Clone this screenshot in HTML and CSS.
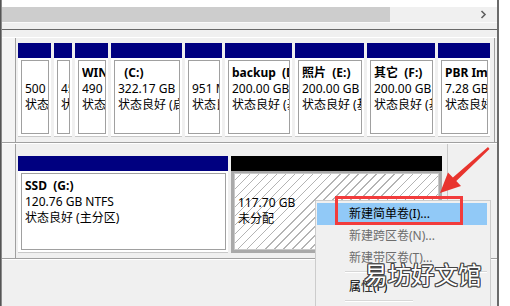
FILE: index.html
```html
<!DOCTYPE html>
<html>
    <head>
        <title>磁盘管理</title>
        <link rel="stylesheet" href="styles.css">
    </head>
    <body>
        <div class="screen">
            <div class="edge_left"></div>
            <div class="main">
                <div class="top_white"></div>
                <div class="hscroll">
                    <div class="thumb"></div>
                    <div class="arrow">
                        <svg width="7" height="9" viewBox="0 0 7 9"><path d="M1.5 1 L5 4.5 L1.5 8" fill="none" stroke="#606060" stroke-width="1.6"/></svg>
                    </div>
                </div>
                <div class="band"></div>
                <div class="lower">
                    <!-- disk 0 -->
                    <div class="disk disk_one">
                        <div class="label"></div>
                        <div class="parts">
                            <div class="part" style="width:33px">
                                <div class="bar"></div>
                                <div class="body"><div class="inner"><b class="name">&nbsp;</b><span>500 MB NTFS</span><span>状态良好 (恢复分区)</span></div></div>
                            </div>
                            <div class="part" style="width:18px">
                                <div class="bar"></div>
                                <div class="body"><div class="inner"><b class="name">&nbsp;</b><span>450 MB</span><span>状态良好 (EFI 系统分区)</span></div></div>
                            </div>
                            <div class="part" style="width:33px">
                                <div class="bar"></div>
                                <div class="body"><div class="inner"><b class="name">WINRE</b><span>490 MB NTFS</span><span>状态良好 (恢复分区)</span></div></div>
                            </div>
                            <div class="part" style="width:71px">
                                <div class="bar"></div>
                                <div class="body"><div class="inner"><b class="name">&nbsp;&nbsp;(C:)</b><span>322.17 GB NTFS</span><span>状态良好 (启动, 页面文件)</span></div></div>
                            </div>
                            <div class="part" style="width:37px">
                                <div class="bar"></div>
                                <div class="body"><div class="inner"><b class="name">&nbsp;</b><span>951 MB</span><span>状态良好 (恢复分区)</span></div></div>
                            </div>
                            <div class="part" style="width:67px">
                                <div class="bar"></div>
                                <div class="body"><div class="inner"><b class="name">backup&nbsp;&nbsp;(D:)</b><span>200.00 GB NTFS</span><span>状态良好 (基本数据分区)</span></div></div>
                            </div>
                            <div class="part" style="width:69px">
                                <div class="bar"></div>
                                <div class="body"><div class="inner"><b class="name">照片&nbsp;&nbsp;(E:)</b><span>200.00 GB NTFS</span><span>状态良好 (基本数据分区)</span></div></div>
                            </div>
                            <div class="part" style="width:68px">
                                <div class="bar"></div>
                                <div class="body"><div class="inner"><b class="name">其它&nbsp;&nbsp;(F:)</b><span>200.00 GB NTFS</span><span>状态良好 (基本数据分区)</span></div></div>
                            </div>
                            <div class="part" style="width:52px">
                                <div class="bar"></div>
                                <div class="body"><div class="inner"><b class="name">PBR Image</b><span>7.28 GB NTFS</span><span>状态良好 (OEM 分区)</span></div></div>
                            </div>
                        </div>
                    </div>
                    <!-- disk 1 -->
                    <div class="disk disk_two">
                        <div class="label"></div>
                        <div class="parts">
                            <div class="part" style="width:210px">
                                <div class="bar"></div>
                                <div class="body"><div class="inner"><b class="name">SSD&nbsp;&nbsp;(G:)</b><span>120.76 GB NTFS</span><span>状态良好 (主分区)</span></div></div>
                            </div>
                            <div class="part" style="width:211px">
                                <div class="bar black"></div>
                                <div class="body unalloc"><div class="inner"><b class="name">&nbsp;</b><span>117.70 GB</span><span>未分配</span></div></div>
                            </div>
                        </div>
                    </div>
                    <div class="bottom_line"></div>
                </div>
            </div>
            <div class="edge_right"></div>
            <div class="rest"></div>
        </div>

        <!-- right click menu -->
        <div class="menu">
            <div class="item hot">新建简单卷(I)...</div>
            <div class="item off">新建跨区卷(N)...</div>
            <div class="item off">新建带区卷(T)...</div>
            <div class="sep"></div>
            <div class="item">属性(P)</div>
            <div class="sep short"></div>
        </div>
        <div class="red_box"></div>
        <svg class="red_arrow" width="510" height="306" viewBox="0 0 510 306">
            <polygon points="488,147 489.5,149 456.3,181.1 461,186 440,193 448,172.5 452.9,177.5" fill="#e8342e"/>
        </svg>
        <div class="watermark">易坊好文馆</div>
    </body>
</html>
```

FILE: styles.css
```css
body{
    margin: 0;
    width: 510px;
    height: 306px;
    overflow: hidden;
    background: #fff;
    font-family: "Noto Sans", "Noto Sans CJK SC", sans-serif;
    font-size: 12px;
    color: #000;
    position: relative;
}
.screen{
    display: flex;
    height: 306px;
}
.edge_left{
    width: 1px;
    background: #555;
    border-right: 1px solid #8a8a8a;
}
.main{
    width: 495px;
    display: flex;
    flex-direction: column;
}
.edge_right{
    width: 2px;
    background: #6b6b6b;
}
.rest{
    flex: 1;
    background: #fff;
}
.top_white{
    height: 7px;
    background: #fff;
}
.hscroll{
    height: 15px;
    background: #f0f0f0;
    display: flex;
    align-items: stretch;
}
.thumb{
    width: 388px;
    background: #cdcdcd;
}
.arrow{
    flex: 1;
    display: flex;
    justify-content: flex-end;
    align-items: center;
    padding-right: 10px;
}
.band{
    height: 6px;
    background: #f0f0f0;
    border-top: 1px solid #fafafa;
}
.lower{
    flex: 1;
    background: #f0f0f0;
    border-top: 1px solid #696969;
    padding-top: 7px;
}
.disk{
    display: flex;
    border-top: 1px solid #fff;
    border-bottom: 1px solid #a0a0a0;
}
.label{
    width: 13px;
    background: #f4f4f4;
    border-right: 1px solid #a0a0a0;
}
.parts{
    display: flex;
    gap: 3px;
    padding-left: 2px;
}
.disk_one{
    height: 104px;
}
.disk_one .parts{
    flex: 1;
    padding-top: 5px;
    border-right: 1px solid #a0a0a0;
    margin-right: 2px;
}
.disk_one .body{
    height: 79px;
}
.disk_two{
    height: 114px;
    border-bottom: none;
}
.disk_two .parts{
    padding-top: 12px;
    width: 429px;
    border-right: 1px solid #c8c8c8;
}
.disk_two .body{
    height: 82px;
}
.part{
    display: flex;
    flex-direction: column;
}
.bar{
    height: 15px;
    background: #000080;
}
.bar.black{
    background: #000;
}
.body{
    background: #fff;
    padding: 2px 2px 2px 3px;
    box-sizing: border-box;
    border-bottom: 1px solid #c8c8c8;
}
.inner{
    height: 100%;
    box-sizing: border-box;
    border: 1px solid #a0a0a0;
    padding: 4px 0 0 3px;
    overflow: hidden;
    white-space: nowrap;
    line-height: 16px;
}
.inner span, .inner b{
    display: block;
    overflow: hidden;
    text-overflow: clip;
}
.name{
    font-weight: bold;
}
.body.unalloc{
    padding: 0;
    border: 3px solid #a9a9a9;
    border-top-width: 2px;
    background: repeating-linear-gradient(135deg, #fff 0 5px, #b4b4b4 5px 6px, #fff 6px 6.4px);
}
.body.unalloc .inner{
    border: 1px solid #c8c8c8;
    padding: 5px 0 0 3px;
}
.bottom_line{
    height: 1px;
    background: #a0a0a0;
    border-bottom: 1px solid #fff;
}
.menu{
    position: absolute;
    left: 315px;
    top: 200px;
    width: 176px;
    height: 120px;
    background: #f0f0f0;
    border: 1px solid #cccccc;
    padding: 2px 3px 0 1px;
    box-sizing: border-box;
}
.item{
    height: 22px;
    line-height: 22px;
    padding-left: 32px;
}
.item.hot{
    background: #91c9f7;
}
.item.off{
    color: #6d6d6d;
}
.sep{
    margin: 2px 0 3px 28px;
    height: 1px;
    background: #d7d7d7;
    border-bottom: 1px solid #fff;
}
.sep.short{
    margin-right: 74px;
}
.red_box{
    position: absolute;
    left: 335px;
    top: 196px;
    width: 128px;
    height: 29px;
    border: 3px solid #f23c3c;
    box-sizing: border-box;
}
.red_arrow{
    position: absolute;
    left: 0;
    top: 0;
}
.watermark{
    position: absolute;
    left: 364px;
    top: 259px;
    font-size: 23.5px;
    line-height: 32px;
    color: #fff;
    text-shadow: 1px 1px 0 #444, -1px -1px 0 #444, 1px -1px 0 #444, -1px 1px 0 #444, 0 1px 0 #444, 1px 0 0 #444, 0 -1px 0 #444, -1px 0 0 #444;
}
```
